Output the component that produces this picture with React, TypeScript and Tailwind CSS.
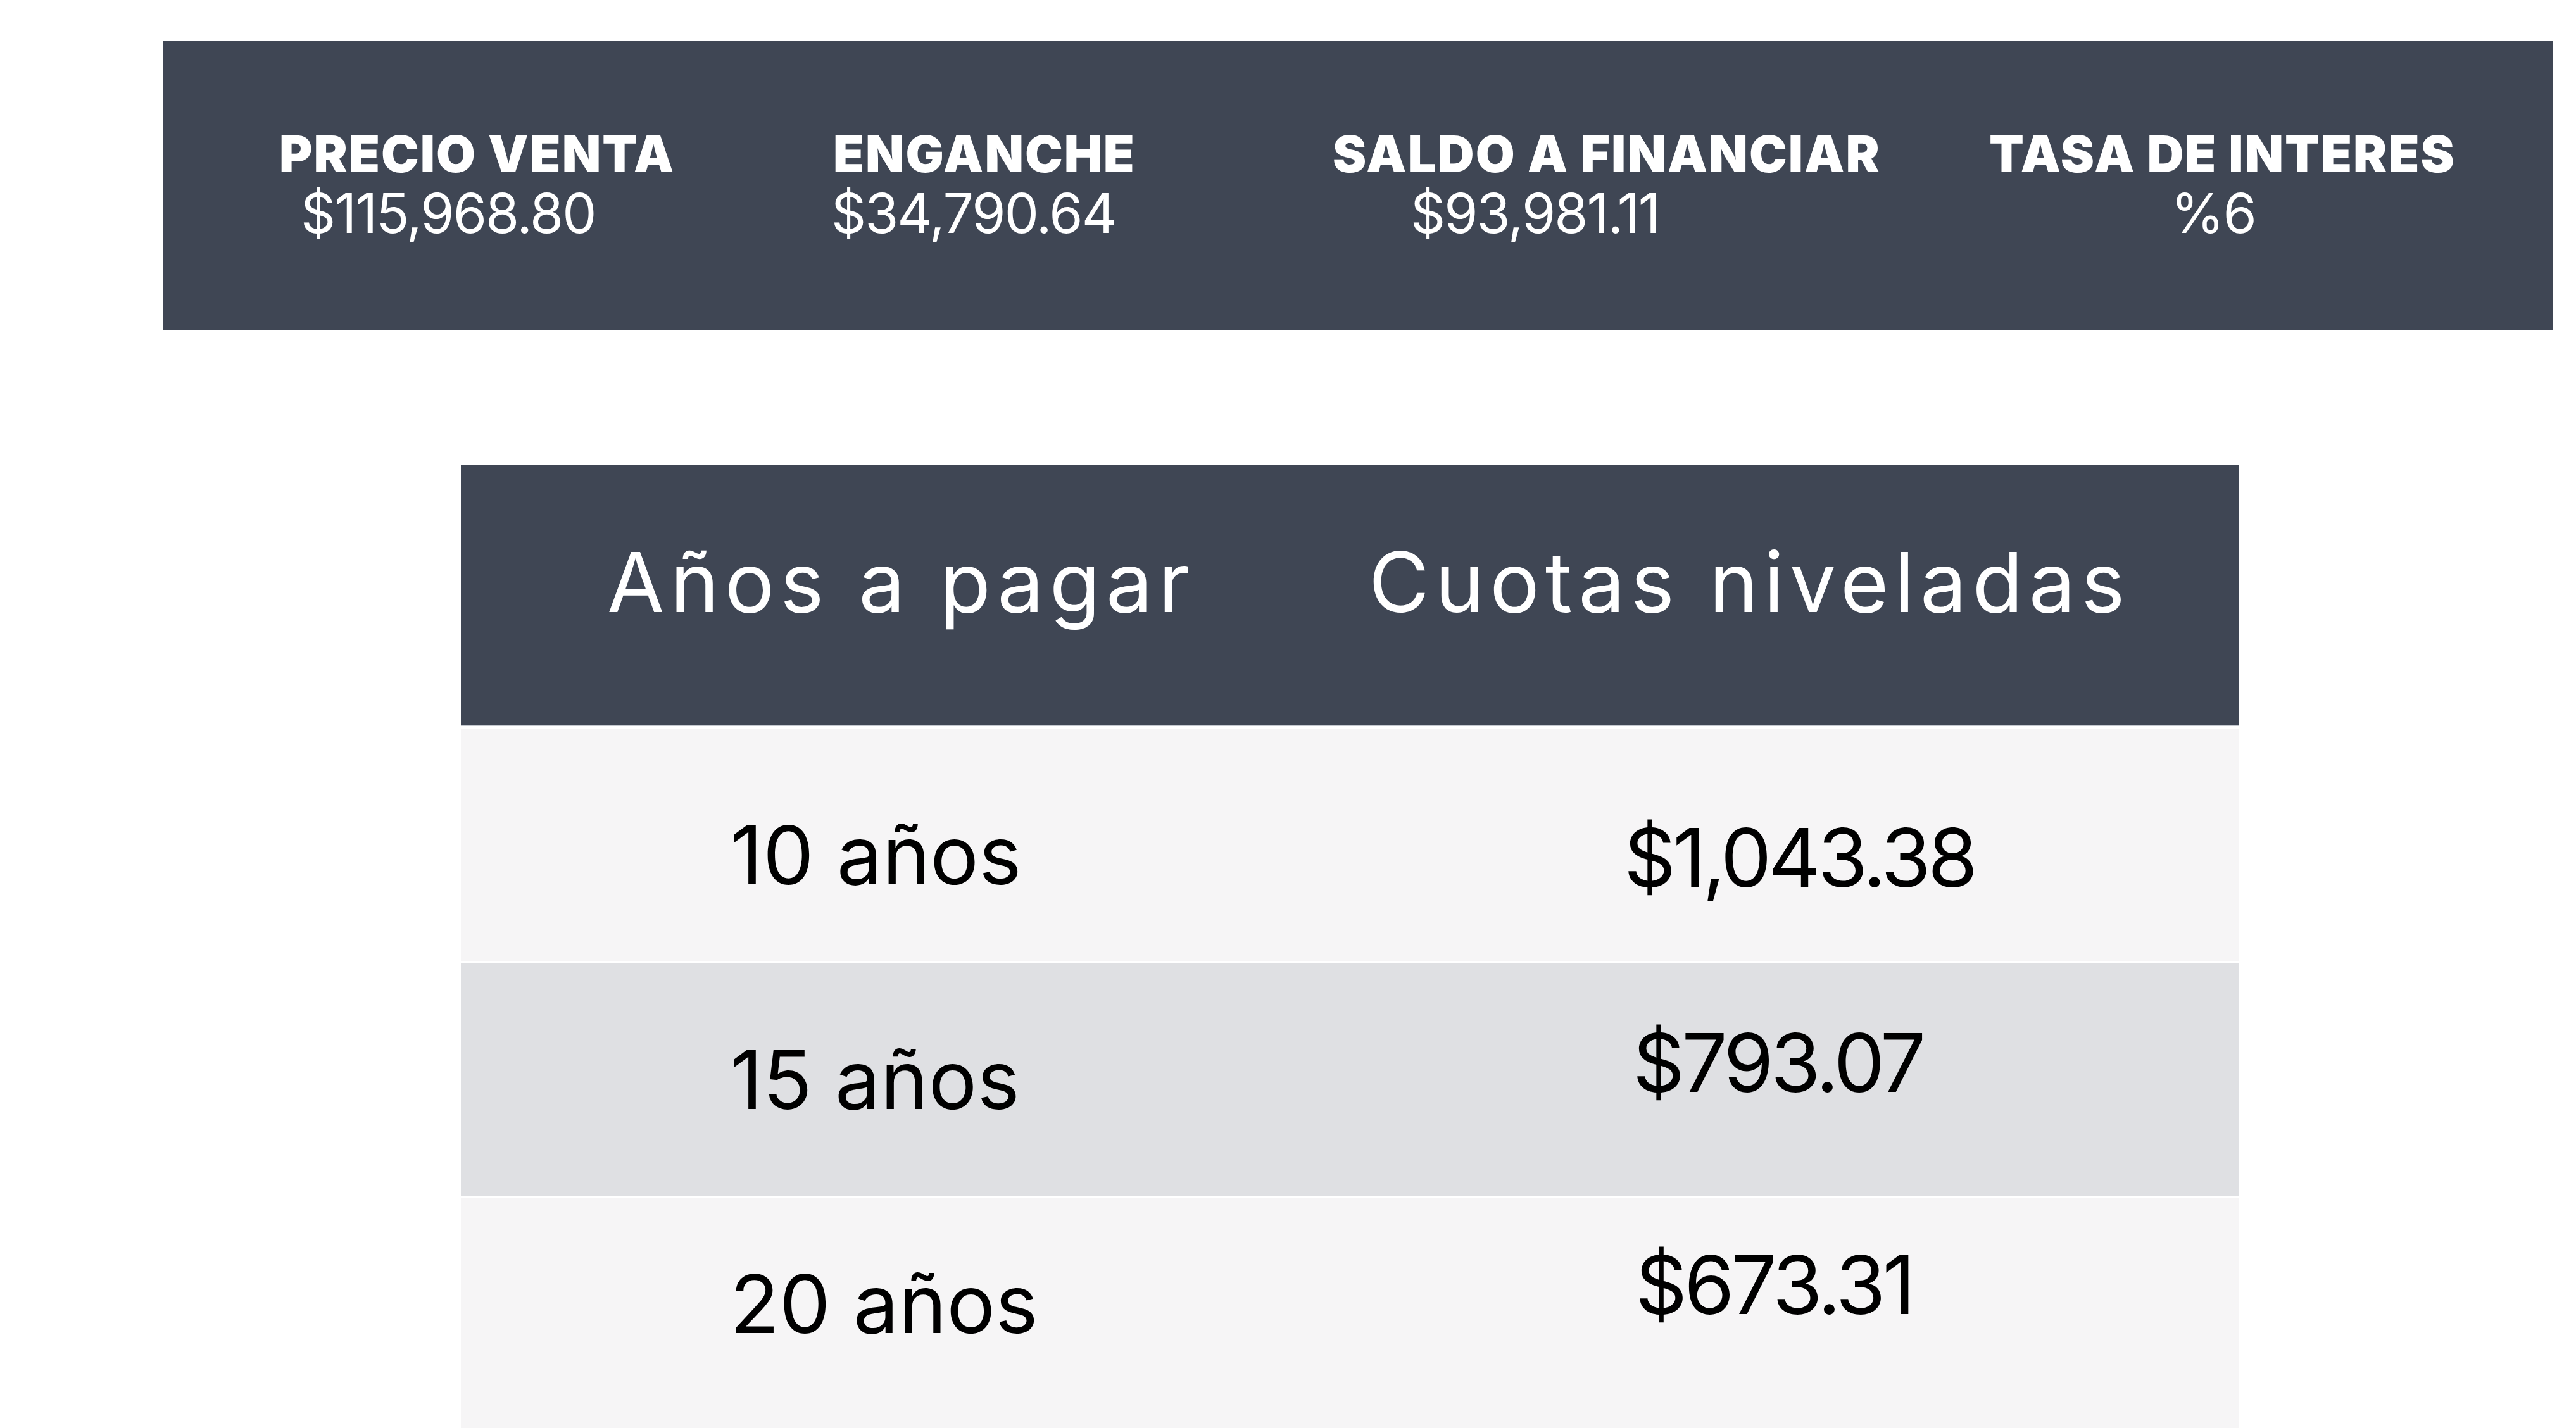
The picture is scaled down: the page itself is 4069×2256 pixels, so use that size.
import React from 'react';

/**
 * Resumen del financiamiento y tabla de cuotas niveladas
 */
const resumen = [
  { label: 'PRECIO VENTA', value: '$115,968.80', col: 'w-[1000px]', labelCls: 'ml-[184px]', valueCls: 'ml-[218px]' },
  { label: 'ENGANCHE', value: '$34,790.64', col: 'w-[800px]', labelCls: 'ml-[59px]', valueCls: 'ml-[56px]' },
  { label: 'SALDO A FINANCIAR', value: '$93,981.11', col: 'w-[1000px]', labelCls: 'ml-[48px]', valueCls: 'ml-[171px]' },
  { label: 'TASA DE INTERES', value: '%6', col: 'w-[975px]', labelCls: 'ml-[85px]', valueCls: 'ml-[372px]' }
];

const cuotas = [
  { anos: '10 años', cuota: '$1,043.38', bg: 'bg-[#f6f5f6]', left: 'pt-[136px] w-[1412px]', right: 'pt-[140px]' },
  { anos: '15 años', cuota: '$793.07', bg: 'bg-[#dfe0e3]', left: 'pt-[120px] w-[1426px]', right: 'pt-[93px]' },
  { anos: '20 años', cuota: '$673.31', bg: 'bg-[#f6f5f6]', left: 'pt-[103px] w-[1430px]', right: 'pt-[73px]' }
];

const App: React.FC = () => {
  return (
    <div className="w-[4069px] h-[2256px] bg-white overflow-hidden font-['Inter',sans-serif]">
      {/* Barra superior */}
      <div className="ml-[257px] mt-[64px] w-[3775px] h-[458px] bg-[#3f4654] border-b border-[#8e939c] flex pt-[139px]">
        {resumen.map((item) => (
          <div key={item.label} className={`${item.col} flex flex-col items-start text-white`}>
            <span className={`${item.labelCls} text-[80px] leading-[80px] font-black tracking-[2px] whitespace-nowrap`}>
              {item.label}
            </span>
            <span className={`${item.valueCls} mt-[11px] text-[86px] leading-[86px] font-normal tracking-[-2px] whitespace-nowrap`}>
              {item.value}
            </span>
          </div>
        ))}
      </div>

      {/* Tabla de cuotas */}
      <div className="ml-[728px] mt-[213px] w-[2809px] flex flex-col gap-[4px]">
        <div className="h-[412px] bg-[#3f4654] border-b border-[#c3c7ce] flex items-start pt-[119px] text-white text-[131px] leading-[131px] tracking-[9px]">
          <span className="ml-[231px] w-[1203px] whitespace-nowrap">Años a pagar</span>
          <span className="whitespace-nowrap">Cuotas niveladas</span>
        </div>
        {cuotas.map((row) => (
          <div key={row.anos} className={`h-[367px] ${row.bg} flex items-start text-black text-[128px] leading-[128px]`}>
            <span className={`${row.left} ml-[425px] whitespace-nowrap`}>{row.anos}</span>
            <span className={`${row.right} tracking-[-5px] whitespace-nowrap`}>{row.cuota}</span>
          </div>
        ))}
      </div>
    </div>
  );
};

export default App;
